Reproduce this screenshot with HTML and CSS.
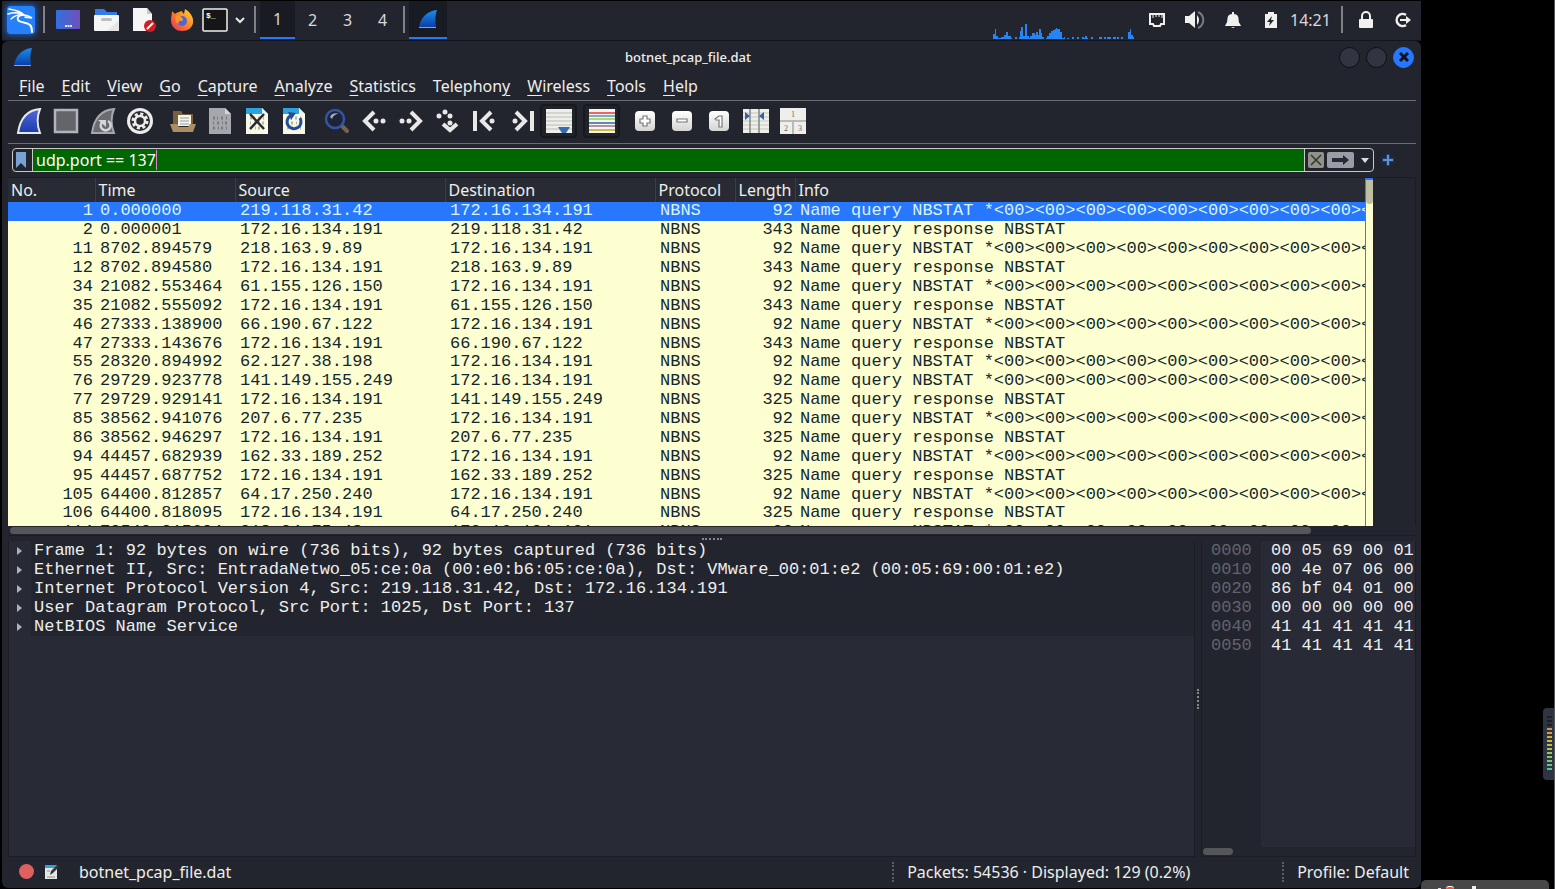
FILE: index.html
```html
<!DOCTYPE html>
<html lang="en">
<head>
    <meta charset="UTF-8">
    <meta name="viewport" content="width=device-width, initial-scale=1.0">
    <title>botnet_pcap_file.dat</title>
    <link rel="stylesheet" href="styles.css">
</head>
<body>
    <svg class="defs" aria-hidden="true">
        <defs>
            <linearGradient id="fin-blue" x1="0" y1="0" x2="0" y2="1"><stop offset="0" stop-color="#1c8cf0"/><stop offset="1" stop-color="#0a3fa8"/></linearGradient>
            <linearGradient id="fin-start" x1="0" y1="0" x2="0" y2="1"><stop offset="0" stop-color="#5068d8"/><stop offset="1" stop-color="#1c3cac"/></linearGradient>
            <linearGradient id="desk" x1="0" y1="0" x2="1" y2="0"><stop offset="0" stop-color="#3270e0"/><stop offset="1" stop-color="#7050b8"/></linearGradient>
            <linearGradient id="fox" x1="1" y1="0" x2="0" y2="1"><stop offset="0" stop-color="#ffe040"/><stop offset="0.45" stop-color="#ff8a20"/><stop offset="1" stop-color="#f02860"/></linearGradient>
            <linearGradient id="key" x1="0" y1="0" x2="0" y2="1"><stop offset="0" stop-color="#fff"/><stop offset="1" stop-color="#d4d5d2"/></linearGradient>
            <symbol id="fin" viewBox="0 0 20 20"><path d="M1 18C3 8 9 2 19 1c-2 5-2 11-1 17z" fill="url(#fin-blue)"/><path d="M1 18.500h17" stroke="#78a8e0" stroke-width="1"/></symbol>
            <symbol id="page-bits" viewBox="0 0 26 28">
                <path d="M2 1h16l6 6v20H2z" fill="#f8f8e6"/>
                <path d="M2 1h16l6 6H2z" fill="#2ba3dc"/><path d="M18 1v6h6z" fill="#e8f5fa"/>
                <path d="M6 11h2M10 11h1M14 11h2M19 11h1M6 16h1M10 16h2M15 16h1M18 16h2M6 21h2M11 21h1M14 21h2M19 21h1" stroke="#b5b6a6" stroke-width="3"/>
            </symbol>
        </defs>
    </svg>

    <div class="screen">
        <header class="panel">
            <button class="panel-btn" aria-label="Applications">
                <svg class="kali" width="28" height="28" viewBox="0 0 28 28"><rect width="28" height="28" rx="2" fill="#2580fa"/><g fill="none" stroke="#fff" stroke-linecap="round"><path d="M2 3c6 1 12 2 15 6M1 8c6-2 11-2 16 1M4 13c4-4 8-5 13-4" stroke-width="1.400"/><path d="M17 9c3 0 5 1 8 3-3-1-5 0-7-1" stroke-width="1.600"/><path d="M16 9c-5 0-6 3-5 5 2 3 9 2 12 5 2 2 2 4 2 7" stroke-width="2"/></g></svg>
            </button>
            <span class="panel-sep"></span>
            <button class="panel-btn" aria-label="Show desktop">
                <svg width="26" height="20" viewBox="0 0 26 20"><rect x="1" width="24" height="19" rx="1" fill="url(#desk)"/><path d="M10 16h2M12.500 16h2M15 16h2" stroke="#dce4ff" stroke-width="2"/></svg>
            </button>
            <button class="panel-btn" aria-label="Files">
                <svg width="26" height="24" viewBox="0 0 26 24"><path d="M2 1h9l3 3h10v8H2z" fill="#3478ea"/><rect x="1" y="7" width="25" height="16" rx="1" fill="#f5f5f5"/><path d="M26 12v11H14z" fill="#e5e5e5"/><rect x="8" y="10" width="11" height="3" rx="1.500" fill="#bdbdbd"/></svg>
            </button>
            <button class="panel-btn" aria-label="Text editor">
                <svg width="24" height="26" viewBox="0 0 24 26"><path d="M1 1h14l5 6v17H1z" fill="#f6f6f6"/><path d="M15 1v6h5z" fill="#c9c9c9"/><circle cx="18" cy="19" r="6" fill="#d51c22"/><path d="M15 22l6-6" stroke="#fff" stroke-width="2"/></svg>
            </button>
            <button class="panel-btn" aria-label="Firefox">
                <svg width="24" height="24" viewBox="0 0 24 24"><path d="M2 3l3 3c1-1 3-2 4-2l3-1c0 1 1 2 2 3l1-5c5 3 9 8 8 14-1 5-5 8-11 8C5 23 1 18 1 12c0-4 1-6 1-9z" fill="url(#fox)"/><circle cx="12" cy="13" r="5" fill="#4768e0"/><path d="M6 8c3-1 5 0 6 2 2 1 1 3-1 3-3 0-3 2-2 3-3-1-5-4-3-8z" fill="#ff9228"/></svg>
            </button>
            <button class="panel-btn term" aria-label="Terminal">
                <svg width="26" height="24" viewBox="0 0 26 24"><rect x="1" y="1" width="24" height="22" rx="1" fill="#161616" stroke="#f0f0f0" stroke-width="1.500"/><text x="4" y="10" class="term-text">$_</text></svg>
            </button>
            <button class="panel-btn more" aria-label="More terminals">
                <svg width="10" height="8" viewBox="0 0 10 8"><path d="M1 2l4 4 4-4" fill="none" stroke="#e8e8e8" stroke-width="2"/></svg>
            </button>
            <span class="panel-sep"></span>
            <button class="workspace active">1</button>
            <button class="workspace">2</button>
            <button class="workspace">3</button>
            <button class="workspace">4</button>
            <span class="panel-sep"></span>
            <button class="panel-btn task" aria-label="botnet_pcap_file.dat"><svg width="20" height="20"><use href="#fin"/></svg></button>

            <svg class="cpu" width="142" height="38" viewBox="0 0 142 38"><path d="M0 38V33H2V28H3V35H5V37H8V36H11V34H13V31H15V35H18V37H19V38H22V36H24V38H26V36H27V30H28V26H30V35H32V23H34V35H36V37H37V35H39V32H42V34H43V31H45V34H46V28H48V32H49V36H51V38H53V37H54V35H56V32H58V30H60V29H62V28H63V27H64V28H67V31H69V37H71V36H72V38H74V37H76V38H79V36H81V38H84V36H86V38H89V36H91V37H92V35H94V37H95V38H98V36H100V38H106V36H109V38H111V36H113V38H114V36H118V38H120V36H123V38H124V36H126V38H128V36H130V38H135V31H137V28H138V34H140V36H141V38z" fill="#2784f5"/></svg>
            <button class="panel-btn" aria-label="Network">
                <svg width="18" height="16" viewBox="0 0 18 16"><path d="M2 2h14v10h-3l-1 2H6l-1-2H2z" fill="none" stroke="#f0f0ee" stroke-width="2"/><path d="M5 2v4M8 2v3M11 2v3M14 2v4" stroke="#f0f0ee"/></svg>
            </button>
            <button class="panel-btn" aria-label="Volume">
                <svg width="22" height="20" viewBox="0 0 22 20"><path d="M1 6h4l6-5v17l-6-5H1z" fill="#f0f0ee"/><path d="M13 5q4 5 0 10z" fill="#f0f0ee"/><path d="M14 2c7 3 7 13 0 16" fill="none" stroke="#777981" stroke-width="2"/></svg>
            </button>
            <button class="panel-btn" aria-label="Notifications">
                <svg width="18" height="18" viewBox="0 0 18 18"><path d="M8 1h2v2c7 1 3 7 6 10l1 2H1l1-2c3-3-1-9 6-10zM7 16h4l-2 1z" fill="#f0f0ee"/></svg>
            </button>
            <button class="panel-btn" aria-label="Battery">
                <svg width="12" height="18" viewBox="0 0 12 18"><path d="M0 3h3V1h6v2h3v14H0z" fill="#f0f0ee"/><path d="M7 5l-5 6h3l-1 4 5-6H6z" fill="#23252e"/></svg>
            </button>
            <time class="clock">14:21</time>
            <span class="panel-sep"></span>
            <button class="panel-btn" aria-label="Lock screen">
                <svg width="16" height="18" viewBox="0 0 16 18"><rect x="1" y="8" width="14" height="9" rx="1" fill="#f0f0ee"/><path d="M4 8V5a4 4 0 0 1 8 0v3" fill="none" stroke="#f0f0ee" stroke-width="2"/></svg>
            </button>
            <button class="panel-btn logout" aria-label="Log out">
                <svg width="18" height="16" viewBox="0 0 18 16"><path d="M12 3a6 6 0 1 0 0 10" fill="none" stroke="#f0f0ee" stroke-width="2.500"/><path d="M6 7h6V4l5 4-5 4V9H6z" fill="#f0f0ee"/></svg>
            </button>
        </header>

        <main class="window">
            <div class="titlebar">
                <svg width="20" height="20"><use href="#fin"/></svg>
                <h1>botnet_pcap_file.dat</h1>
                <div class="win-buttons">
                    <button aria-label="Minimize"></button>
                    <button aria-label="Maximize"></button>
                    <button class="close" aria-label="Close"><svg width="10" height="10" viewBox="0 0 10 10"><path d="M1 1l8 8M9 1L1 9" stroke="#11131a" stroke-width="3"/></svg></button>
                </div>
            </div>

            <nav class="menubar">
                <button><u>F</u>ile</button>
                <button><u>E</u>dit</button>
                <button><u>V</u>iew</button>
                <button><u>G</u>o</button>
                <button><u>C</u>apture</button>
                <button><u>A</u>nalyze</button>
                <button><u>S</u>tatistics</button>
                <button>Telephon<u>y</u></button>
                <button><u>W</u>ireless</button>
                <button><u>T</u>ools</button>
                <button><u>H</u>elp</button>
            </nav>

            <div class="toolbar">
                <div class="tool-group">
                    <button aria-label="Start capture"><svg width="26" height="28" viewBox="0 0 26 28"><path d="M2 26C4 12 11 3 24 2c-3 7-3 16 0 24z" fill="url(#fin-start)" stroke="#e8e8e8" stroke-width="2"/></svg></button>
                    <button aria-label="Stop capture"><svg width="26" height="26" viewBox="0 0 26 26"><rect x="2" y="2" width="22" height="22" fill="#63656b" stroke="#b2b4bc" stroke-width="2.500"/></svg></button>
                    <button aria-label="Restart capture"><svg width="26" height="28" viewBox="0 0 26 28"><path d="M2 26C4 12 11 3 24 2c-3 7-3 16 0 24z" fill="#696b70" stroke="#a5a7ad" stroke-width="2"/><path d="M18 14a5 5 0 1 1-6 1" fill="none" stroke="#d5d6da" stroke-width="2.500"/><path d="M8 13h8v7z" fill="#d5d6da"/></svg></button>
                    <button aria-label="Capture options"><svg width="28" height="28" viewBox="0 0 28 28"><circle cx="14" cy="14" r="13" fill="#ececec"/><circle cx="14" cy="14" r="10" fill="#2a2b2f"/><circle cx="14" cy="14" r="7" fill="none" stroke="#ececec" stroke-width="3" stroke-dasharray="3 2.500"/><circle cx="14" cy="14" r="5" fill="none" stroke="#ececec" stroke-width="2.500"/></svg></button>
                </div>
                <div class="tool-group">
                    <button aria-label="Open"><svg width="26" height="24" viewBox="0 0 26 24"><path d="M3 2h8l2 3h10v12H3z" fill="#77603e"/><rect x="8" y="6" width="13" height="11" fill="#f4f4ee"/><path d="M10 9h9M10 12h9M10 15h9" stroke="#9c9c96"/><path d="M0 15h7l2 3h9l2-3h6l-3 8H3z" fill="#ad8e64"/></svg></button>
                    <button aria-label="Save"><svg width="26" height="28" viewBox="0 0 26 28"><path d="M2 1h16l6 6v20H2z" fill="#a5a7ad"/><path d="M18 1v6h6z" fill="#d2d4d9"/><path d="M6 11h2M10 11h1M14 11h2M19 11h1M6 16h1M10 16h2M15 16h1M18 16h2M6 21h2M11 21h1M14 21h2M19 21h1" stroke="#797b82" stroke-width="3"/></svg></button>
                    <button aria-label="Close file"><svg width="26" height="28" viewBox="0 0 26 28"><use href="#page-bits"/><path d="M6 7l14 15M20 7L6 22" stroke="#272b2f" stroke-width="2.500"/></svg></button>
                    <button aria-label="Reload"><svg width="26" height="28" viewBox="0 0 26 28"><use href="#page-bits"/><path d="M9 9a7 7 0 1 0 10 2" fill="none" stroke="#204e96" stroke-width="3"/><path d="M7 5l8 1-5 7z" fill="#204e96"/></svg></button>
                </div>
                <div class="tool-group">
                    <button aria-label="Find"><svg width="26" height="26" viewBox="0 0 26 26"><path d="M17 17l6 6" stroke="#75654b" stroke-width="4" stroke-linecap="round"/><circle cx="11" cy="11" r="9" fill="#1d2436" stroke="#3653a5" stroke-width="2.500"/><path d="M6 9c1-3 5-5 9-3-4 0-6 2-7 5z" fill="#a7afc2"/></svg></button>
                    <button aria-label="Back"><svg class="nav" viewBox="0 0 26 26"><path d="M13 4l-9 9 9 9"/><path class="dots" d="M15 13h0M22 13h0"/></svg></button>
                    <button aria-label="Forward"><svg class="nav" viewBox="0 0 26 26"><path d="M13 4l9 9-9 9"/><path class="dots" d="M4 13h0M11 13h0"/></svg></button>
                    <button aria-label="Go to packet"><svg class="nav" viewBox="0 0 26 26"><path d="M8 16l7 6 7-6"/><path class="dots" d="M4 8h0M10 4h0M15 8h0M15 15h0"/></svg></button>
                    <button aria-label="First packet"><svg class="nav" viewBox="0 0 26 26"><path d="M3 3v20M19 4l-9 9 9 9"/><path class="dots" d="M20 13h0"/></svg></button>
                    <button aria-label="Last packet"><svg class="nav" viewBox="0 0 26 26"><path d="M23 3v20M7 4l9 9-9 9"/><path class="dots" d="M6 13h0"/></svg></button>
                    <button class="pressed" aria-label="Auto scroll" aria-pressed="true"><svg width="26" height="24" viewBox="0 0 26 24"><path d="M0 0h26v24H0z" fill="#eeeeea"/><path d="M0 4h26M0 8h26M0 12h26M0 16h26M0 20h26" stroke="#babbb6"/><path d="M12 18h12l-4 6h-4z" fill="#386bb0"/></svg></button>
                </div>
                <div class="tool-group">
                    <button class="pressed" aria-label="Colorize" aria-pressed="true"><svg width="26" height="24" viewBox="0 0 26 24"><path d="M0 0h26v24H0z" fill="#f4f4f0"/><g stroke-width="1.400"><path d="M0 4h26" stroke="#ef2929"/><path d="M0 7h26" stroke="#5684b8"/><path d="M0 10h26" stroke="#82d633"/><path d="M0 14h26" stroke="#2a5696"/><path d="M0 17h26" stroke="#8c688d"/><path d="M0 21h26" stroke="#c4a000"/></g></svg></button>
                </div>
                <div class="tool-group">
                    <button aria-label="Zoom in"><svg width="20" height="20" viewBox="0 0 20 20"><rect width="20" height="20" rx="4" fill="url(#key)"/><path d="M8 5h4v3h3v4h-3v3H8v-3H5V8h3z" fill="#fff" stroke="#777" stroke-width="1.200"/></svg></button>
                    <button aria-label="Zoom out"><svg width="20" height="20" viewBox="0 0 20 20"><rect width="20" height="20" rx="4" fill="url(#key)"/><path d="M5 8h10v3H5z" fill="#fff" stroke="#777" stroke-width="1.200"/></svg></button>
                    <button aria-label="Normal size"><svg width="20" height="20" viewBox="0 0 20 20"><rect width="20" height="20" rx="4" fill="url(#key)"/><path d="M6 8l4-3h3v11h-3V9H7z" fill="#fff" stroke="#777" stroke-width="1.200"/></svg></button>
                    <button aria-label="Resize columns"><svg width="26" height="24" viewBox="0 0 26 24"><path d="M0 0h26v24H0z" fill="#eeeeea"/><path d="M0 4h26M0 8h26M0 12h26M0 16h26M0 20h26" stroke="#c4c5c0"/><path d="M7 0v24M16 0v24" stroke="#85867f" stroke-width="1.500"/><path d="M2 3l5 4-5 4zM21 3l-5 4 5 4z" fill="#2f64a8"/></svg></button>
                    <button aria-label="Layout"><svg width="26" height="26" viewBox="0 0 26 26"><path d="M0 0h26v26H0z" fill="#b9bab8"/><path d="M0 0h26v12H0zM0 14h12v12H0zM14 14h12v12H14z" fill="#eeeeec"/><g class="layout-num"><text x="13" y="9">1</text><text x="6" y="23">2</text><text x="20" y="23">3</text></g></svg></button>
                </div>
            </div>

            <div class="filterbar">
                <div class="filter">
                    <button class="bookmark" aria-label="Bookmark filter"><svg width="10" height="16" viewBox="0 0 10 16"><path d="M0 0h10v16l-5-5-5 5z" fill="#78a2d2"/></svg></button>
                    <label class="filter-field">
                        <input type="text" value="udp.port == 137" aria-label="Display filter" spellcheck="false"><span class="caret"></span>
                    </label>
                    <button aria-label="Clear filter"><svg width="16" height="16" viewBox="0 0 16 16"><rect width="16" height="16" rx="2" fill="#91938a"/><path d="M3 3l10 10M13 3L3 13" stroke="#33362f" stroke-width="1.500"/></svg></button>
                    <button aria-label="Apply filter"><svg width="27" height="16" viewBox="0 0 27 16"><rect width="27" height="16" rx="2" fill="#9a9ca6"/><path d="M5 6h11V3l6 5-6 5v-3H5z" fill="#272a31"/></svg></button>
                    <button class="history" aria-label="Recent filters"><svg width="8" height="5" viewBox="0 0 8 5"><path d="M0 0h8L4 5z" fill="#dcdcdc"/></svg></button>
                </div>
                <button class="add" aria-label="Add filter button"><svg width="12" height="12" viewBox="0 0 12 12"><path d="M4 0h4v4h4v4H8v4H4V8H0V4h4z" fill="#1c3e74"/><path d="M6 1v10M1 6h10" stroke="#6492cc" stroke-width="2"/></svg></button>
            </div>

            <section class="packets">
                <div class="packet-view">
                    <table>
                        <colgroup><col class="c-no"><col class="c-time"><col class="c-addr"><col class="c-addr"><col class="c-proto"><col class="c-len"><col></colgroup>
                        <thead>
                            <tr><th>No.</th><th>Time</th><th>Source</th><th>Destination</th><th>Protocol</th><th>Length</th><th>Info</th></tr>
                        </thead>
                        <tbody id="packets"></tbody>
                    </table>
                </div>
                <div class="vscroll"><span></span></div>
                <div class="minimap"></div>
            </section>
            <div class="hscroll"><span></span></div>
            <div class="split-h"></div>

            <section class="lower">
                <div class="details">
                    <button>Frame 1: 92 bytes on wire (736 bits), 92 bytes captured (736 bits)</button>
                    <button>Ethernet II, Src: EntradaNetwo_05:ce:0a (00:e0:b6:05:ce:0a), Dst: VMware_00:01:e2 (00:05:69:00:01:e2)</button>
                    <button>Internet Protocol Version 4, Src: 219.118.31.42, Dst: 172.16.134.191</button>
                    <button>User Datagram Protocol, Src Port: 1025, Dst Port: 137</button>
                    <button>NetBIOS Name Service</button>
                </div>
                <div class="split-v"></div>
                <div class="bytes">
                    <div class="dump">
<pre class="offsets">0000
0010
0020
0030
0040
0050</pre>
<pre class="hex">00 05 69 00 01
00 4e 07 06 00
86 bf 04 01 00
00 00 00 00 00
41 41 41 41 41
41 41 41 41 41</pre>
                    </div>
                    <div class="bytes-scroll"><span></span></div>
                </div>
            </section>

            <footer class="status">
                <button class="expert" aria-label="Expert information"></button>
                <button aria-label="Capture comments"><svg width="16" height="16" viewBox="0 0 16 16"><path d="M1 1h12v14H1z" fill="#e6e8e4"/><path d="M1 1h12v3H1z" fill="#34a3dc"/><path d="M6 11l1-4 6-6 2 2-6 6z" fill="#34383b"/><path d="M3 7h3M3 13h8" stroke="#8b8f8d"/></svg></button>
                <span class="file">botnet_pcap_file.dat</span>
                <span class="counts">Packets: 54536 · Displayed: 129 (0.2%)</span>
                <span class="profile">Profile: Default</span>
            </footer>
        </main>
    </div>

    <aside class="outside">
        <div class="meter"></div>
        <div class="dock"><i class="tick"></i><i class="record"></i><i class="bar"></i></div>
    </aside>

    <script>
        const host = '172.16.134.191';
        // no, time, remote address, length (92 = query in, otherwise response out)
        const packets = [
            [1, '0.000000', '219.118.31.42', 92],
            [2, '0.000001', '219.118.31.42', 343],
            [11, '8702.894579', '218.163.9.89', 92],
            [12, '8702.894580', '218.163.9.89', 343],
            [34, '21082.553464', '61.155.126.150', 92],
            [35, '21082.555092', '61.155.126.150', 343],
            [46, '27333.138900', '66.190.67.122', 92],
            [47, '27333.143676', '66.190.67.122', 343],
            [55, '28320.894992', '62.127.38.198', 92],
            [76, '29729.923778', '141.149.155.249', 92],
            [77, '29729.929141', '141.149.155.249', 325],
            [85, '38562.941076', '207.6.77.235', 92],
            [86, '38562.946297', '207.6.77.235', 325],
            [94, '44457.682939', '162.33.189.252', 92],
            [95, '44457.687752', '162.33.189.252', 325],
            [105, '64400.812857', '64.17.250.240', 92],
            [106, '64400.818095', '64.17.250.240', 325],
            [114, '70540.015604', '218.24.75.48', 92]
        ];

        const body = document.getElementById('packets');
        packets.forEach(([no, time, remote, length], index) => {
            const query = length === 92;
            const cells = [
                no, time,
                query ? remote : host,
                query ? host : remote,
                'NBNS', length,
                query ? 'Name query NBSTAT *' + '<00>'.repeat(15) : 'Name query response NBSTAT'
            ];
            const row = body.insertRow();
            if (index === 0) row.className = 'selected';
            cells.forEach(value => {
                row.insertCell().textContent = value;
            });
        });
    </script>
</body>
</html>
```
FILE: styles.css
```css
:root {
    --base: #23252e;
    --pane: #282a35;
    --edge: #1b1d24;
    --line: #6b6d73;
    --blue: #2777ff;
    --text: #eeeeec;
    --packet: #feffd0;
    --ui: "Noto Sans", sans-serif;
    --mono: "Liberation Mono", monospace;
}

* {
    box-sizing: border-box;
}

body {
    margin: 0;
    height: 100vh;
    display: grid;
    grid-template-columns: minmax(0, 1fr) 134px;
    overflow: hidden;
    background: #000;
    color: var(--text);
    font: 16px/20px var(--ui);
}

button {
    display: flex;
    align-items: center;
    justify-content: center;
    flex: none;
    padding: 0;
    border: 0;
    background: none;
    color: inherit;
    font: inherit;
}

svg {
    display: block;
    flex: none;
}

.defs {
    position: absolute;
    width: 0;
    height: 0;
}

.screen {
    display: flex;
    flex-direction: column;
    min-width: 0;
    height: 100vh;
    padding: 1px 0 1px 2px;
}

/* desktop panel */
.panel {
    display: flex;
    align-items: stretch;
    flex: none;
    height: 40px;
    padding-bottom: 1px;
    background: var(--base);
    border-bottom: 1px solid #14161b;
}

.panel-btn {
    width: 38px;
}

.kali {
    border-radius: 3px;
    box-shadow: 0 0 6px 1px #1a62d0;
}

.panel-sep {
    width: 2px;
    margin: 5px 4px 6px 3px;
    background: #808288;
}

.panel-btn.term {
    width: 28px;
}

.panel-btn.more {
    width: 22px;
}

.panel-btn.logout {
    width: 36px;
}

.term-text {
    fill: #fff;
    font: bold 8px var(--mono);
}

.workspace {
    width: 35px;
    color: #d8dade;
}

.workspace.active,
.task {
    background: #191b22;
    border-bottom: 2px solid var(--blue);
}

.cpu {
    margin-left: auto;
    margin-right: 3px;
}

.clock {
    display: flex;
    align-items: center;
    width: 48px;
    color: #d8dade;
}

/* window */
.window {
    display: flex;
    flex-direction: column;
    flex: 1;
    min-height: 0;
    padding: 0 5px 0 6px;
    background: var(--base);
    border-radius: 6px;
}

.titlebar {
    display: flex;
    align-items: center;
    flex: none;
    height: 32px;
    padding: 0 2px 0 5px;
}

.titlebar h1 {
    flex: 1;
    margin: 0;
    padding-left: 4px;
    text-align: center;
    font-size: 13px;
    font-weight: 500;
}

.win-buttons {
    display: flex;
    gap: 6px;
}

.win-buttons button {
    width: 21px;
    height: 21px;
    border: 1px solid #0d0e12;
    border-radius: 50%;
    background: #323541;
}

.win-buttons .close {
    background: var(--blue);
    border-color: var(--blue);
}

.menubar {
    display: flex;
    gap: 17px;
    height: 28px;
    padding: 0 11px;
    border-bottom: 1px solid var(--line);
}

.menubar button {
    display: block;
    height: 26px;
}

.menubar u {
    text-underline-offset: 3px;
}

.toolbar {
    display: flex;
    align-items: center;
    gap: 6px;
    height: 43px;
    padding: 0 2px 2px;
    border-bottom: 1px solid var(--line);
}

.tool-group {
    display: flex;
}

.toolbar button {
    width: 37px;
    height: 34px;
}

.toolbar .pressed {
    border: 2px solid #17191f;
    border-radius: 4px;
    background: #21232b;
}

.nav {
    width: 26px;
    height: 26px;
    fill: none;
    stroke: #e8e8e6;
    stroke-width: 4;
}

.nav .dots {
    stroke-width: 5;
    stroke-linecap: round;
}

.layout-num {
    fill: #686a66;
    font: 8px "Liberation Serif", serif;
    text-anchor: middle;
}

/* display filter */
.filterbar {
    display: flex;
    align-items: center;
    gap: 8px;
    padding: 4px 22px 5px 4px;
}

.filter {
    display: flex;
    align-items: center;
    gap: 3px;
    flex: 1;
    height: 24px;
    border: 1px solid #c9cac8;
    border-radius: 4px;
}

.bookmark {
    width: 16px;
}

.filter-field {
    display: flex;
    align-items: center;
    align-self: stretch;
    flex: 1;
    padding-left: 3px;
    background: #006600;
    border: solid #c9cac8;
    border-width: 0 1px;
}

.filter-field input {
    field-sizing: content;
    height: 20px;
    padding: 0;
    border: 0;
    outline: 0;
    background: none;
    color: #fff;
    font: inherit;
}

.caret {
    width: 1px;
    height: 20px;
    background: #d68ad0;
}

.history {
    width: 16px;
}

.add {
    width: 12px;
}

/* packet list */
.packets {
    display: flex;
    flex: none;
    height: 349px;
    border-top: 1px solid var(--edge);
}

.packet-view {
    flex: 1;
    min-width: 0;
    overflow: hidden;
    background: var(--packet);
}

table {
    width: 100%;
    height: 364px;
    table-layout: fixed;
    border-collapse: collapse;
    color: #12272e;
    font: 17px/18px var(--mono);
}

.c-no { width: 87px; }
.c-time { width: 140px; }
.c-addr { width: 210px; }
.c-proto { width: 80px; }
.c-len { width: 60px; }

th {
    height: 24px;
    padding: 0 3px;
    border-right: 1px solid #3a3d46;
    background: #282b34;
    color: var(--text);
    text-align: left;
    font: 16px/22px var(--ui);
}

th:last-child {
    border-right: 0;
}

td {
    padding: 0 5px;
    overflow: hidden;
    white-space: nowrap;
}

td:nth-child(1),
td:nth-child(6) {
    padding: 0 2px;
    text-align: right;
}

.selected {
    background: var(--blue);
    color: #d9f3ff;
}

.vscroll {
    width: 8px;
    background: var(--packet);
    border-top: 2px solid var(--blue);
    border-left: 1px solid #77786a;
}

.vscroll span {
    display: block;
    height: 24px;
    border-radius: 0 0 4px 4px;
    background: #bdbea2;
}

.minimap {
    width: 43px;
    border-right: 1px solid var(--edge);
}

.hscroll {
    display: flex;
    height: 10px;
    padding: 1px 51px 1px 2px;
    border-bottom: 1px solid var(--edge);
}

.hscroll span {
    width: 96%;
    height: 7px;
    border-radius: 4px;
    background: #555659;
}

.split-h {
    display: flex;
    justify-content: center;
    height: 5px;
    padding-top: 2px;
}

.split-h::before {
    content: "";
    width: 20px;
    border-top: 2px dotted #85878c;
}

/* details and bytes */
.lower {
    display: flex;
    flex: 1;
    min-height: 0;
    font: 17px/19px var(--mono);
}

.details {
    flex: 1;
    min-width: 0;
    background: var(--pane);
    border: 1px solid var(--edge);
    border-top: 0;
    overflow: hidden;
}

.details button {
    justify-content: flex-start;
    width: 100%;
    white-space: nowrap;
    background: linear-gradient(var(--base), var(--base)) 22px 0 no-repeat;
}

.details button::before {
    content: "";
    margin: 0 12px 0 8px;
    border: solid transparent;
    border-width: 4px 0 4px 5px;
    border-left-color: #b0b2b6;
}

.split-v {
    display: flex;
    align-items: center;
    justify-content: center;
    width: 6px;
}

.split-v::before {
    content: "";
    height: 20px;
    border-left: 2px dotted #85878c;
}

.bytes {
    display: flex;
    flex-direction: column;
    width: 215px;
    border: 1px solid var(--edge);
    border-top: 0;
}

.dump {
    display: flex;
    flex: 1;
}

pre {
    margin: 0;
    font: inherit;
}

.offsets {
    width: 59px;
    padding-left: 9px;
    color: #62646b;
}

.hex {
    flex: 1;
    padding-left: 10px;
    overflow: hidden;
    background: var(--pane);
}

.bytes-scroll {
    padding: 1px;
}

.bytes-scroll span {
    display: block;
    width: 30px;
    height: 7px;
    border-radius: 4px;
    background: #555659;
}

/* status bar */
.status {
    display: flex;
    align-items: center;
    gap: 10px;
    flex: none;
    height: 31px;
    padding: 0 7px 2px 11px;
}

.expert {
    width: 15px;
    height: 15px;
    border-radius: 50%;
    background: #e0605f;
}

.file {
    flex: 1;
    padding-left: 9px;
}

.counts,
.profile {
    padding-left: 13px;
    border-left: 2px dotted #5b5d64;
}

.counts {
    width: 380px;
}

/* area right of the guest screen */
.outside {
    position: relative;
    border-right: 1px solid #55565a;
}

.meter {
    position: absolute;
    right: 0;
    top: 708px;
    width: 11px;
    height: 72px;
    padding: 8px 2px 8px 4px;
    border-radius: 4px 0 0 4px;
    background: #2f3443;
}

.meter::before {
    content: "";
    display: block;
    height: 100%;
    background:
        repeating-linear-gradient(transparent 0 2px, #2f3443 2px 4px),
        linear-gradient(#1c1f28 20%, #d88a48 20%, #d3b52c 40%, #a4c850 60%, #44c4a8);
}

.dock {
    position: absolute;
    left: 0;
    bottom: 0;
    display: flex;
    align-items: flex-end;
    gap: 5px;
    width: 128px;
    height: 9px;
    padding-left: 17px;
    overflow: hidden;
    border-radius: 5px 5px 0 0;
    background: #474747;
}

.tick {
    width: 3px;
    height: 1px;
    background: #ddd;
}

.record {
    width: 8px;
    height: 3px;
    border-radius: 4px 4px 0 0;
    background: #f05030;
    border-top: 1px solid #fff;
}

.bar {
    width: 4px;
    height: 3px;
    margin-left: 13px;
    background: #eee;
}
```
